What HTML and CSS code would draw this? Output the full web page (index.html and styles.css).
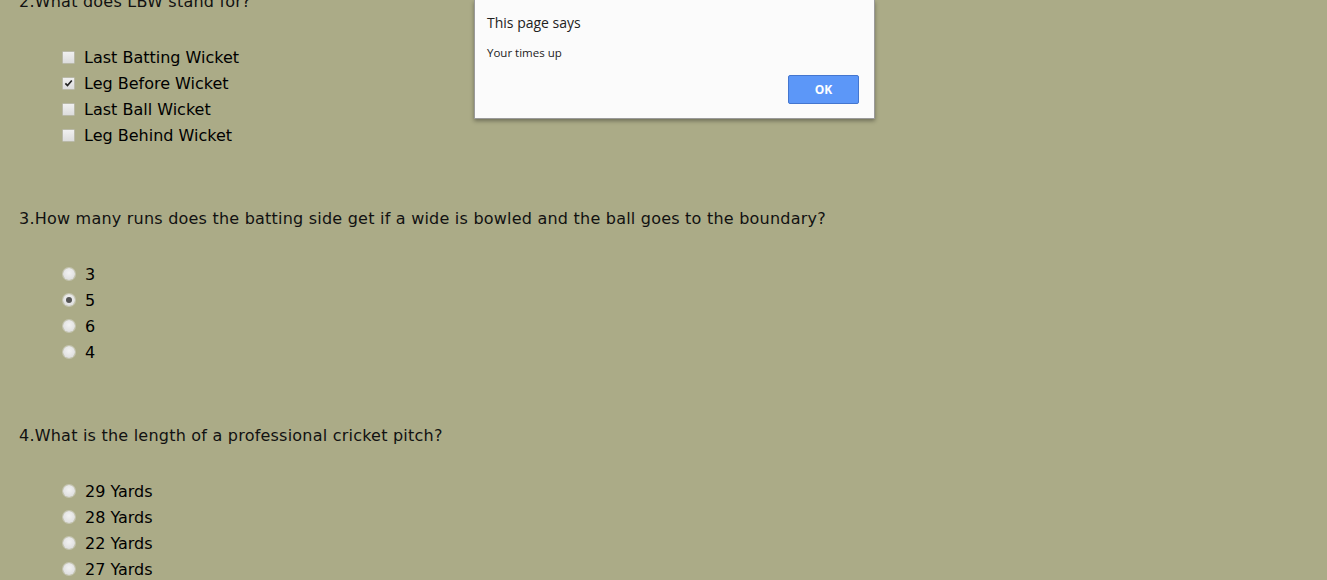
FILE: index.html
```html
<!DOCTYPE html>
<html>
<head>
<meta charset="utf-8">
<title>Cricket Quiz</title>
<link rel="stylesheet" href="styles.css">
</head>
<body>
<div class="quiz">
  <div class="q">
    <p class="title">2.What does LBW stand for?</p>
    <ul class="opts">
      <li><span class="cb"></span>Last Batting Wicket</li>
      <li><span class="cb checked"><svg viewBox="0 0 12 12" width="12" height="12"><path d="M2.6 6.4 L4.9 8.8 L9.6 3.2" fill="none" stroke="#222" stroke-width="1.8"/></svg></span>Leg Before Wicket</li>
      <li><span class="cb"></span>Last Ball Wicket</li>
      <li><span class="cb"></span>Leg Behind Wicket</li>
    </ul>
  </div>
  <div class="q">
    <p class="title">3.How many runs does the batting side get if a wide is bowled and the ball goes to the boundary?</p>
    <ul class="opts">
      <li><span class="rd"></span>3</li>
      <li><span class="rd on"></span>5</li>
      <li><span class="rd"></span>6</li>
      <li><span class="rd"></span>4</li>
    </ul>
  </div>
  <div class="q">
    <p class="title">4.What is the length of a professional cricket pitch?</p>
    <ul class="opts">
      <li><span class="rd"></span>29 Yards</li>
      <li><span class="rd"></span>28 Yards</li>
      <li><span class="rd"></span>22 Yards</li>
      <li><span class="rd"></span>27 Yards</li>
    </ul>
  </div>
</div>
<div class="dialog">
  <div class="dlg-title">This page says</div>
  <div class="dlg-msg">Your times up</div>
  <div class="dlg-actions"><button class="ok">OK</button></div>
</div>
</body>
</html>
```
FILE: styles.css
```css
html, body {
  margin: 0;
  padding: 0;
  background: #abab87;
  height: 100%;
  overflow: hidden;
}
body {
  font-family: "DejaVu Sans", Verdana, sans-serif;
  font-size: 16px;
  color: #111;
}
.quiz {
  padding-left: 19px;
  margin-top: -8px;
}
.q {
  margin-bottom: 60px;
}
.title {
  margin: 0;
  height: 20px;
  line-height: 20px;
  white-space: nowrap;
  letter-spacing: 0.22px;
}
.opts {
  list-style: none;
  margin: 33px 0 0 0;
  padding: 0 0 0 43px;
}
.opts li {
  height: 26px;
  line-height: 26px;
  display: flex;
  align-items: center;
  color: #000;
}
.cb {
  width: 11px;
  height: 11px;
  border: 1px solid #b9b9a8;
  border-radius: 1px;
  background: linear-gradient(#f0f0f0, #dcdcdc);
  margin-right: 9px;
  position: relative;
  top: -1px;
  display: flex;
  align-items: center;
  justify-content: center;
  flex: none;
}
.cb svg {
  display: block;
}
.rd {
  width: 12px;
  height: 12px;
  border-radius: 50%;
  background: radial-gradient(circle at 50% 40%, #f2f2f2, #d8d8d8);
  box-shadow: 0 0 0 1px #c4c4b0;
  margin-left: 1px;
  margin-right: 10px;
  position: relative;
  top: -1px;
  flex: none;
}
.rd.on::after {
  content: "";
  position: absolute;
  left: 3px;
  top: 3px;
  width: 6px;
  height: 6px;
  border-radius: 50%;
  background: #555;
}
.dialog {
  position: absolute;
  left: 474px;
  top: 0;
  width: 399px;
  height: 118px;
  background: #fbfbfb;
  border: 1px solid #9a9a9a;
  border-top: none;
  box-shadow: 0 2px 4px rgba(0, 0, 0, 0.35);
  font-family: "Open Sans", "Noto Sans", sans-serif;
  color: #222;
}
.dlg-title {
  font-size: 14px;
  line-height: 18px;
  padding: 14px 0 0 12px;
}
.dlg-msg {
  font-size: 11.5px;
  line-height: 16px;
  padding: 13px 0 0 12px;
}
.dlg-actions {
  display: flex;
  justify-content: flex-end;
  padding: 14px 15px 0 0;
}
.ok {
  width: 71px;
  height: 29px;
  background: #5c97f8;
  border: 1px solid #4476cf;
  border-radius: 2px;
  color: #fff;
  font-family: "Open Sans", "Noto Sans", sans-serif;
  font-weight: bold;
  font-size: 12px;
  padding: 0;
}
```
